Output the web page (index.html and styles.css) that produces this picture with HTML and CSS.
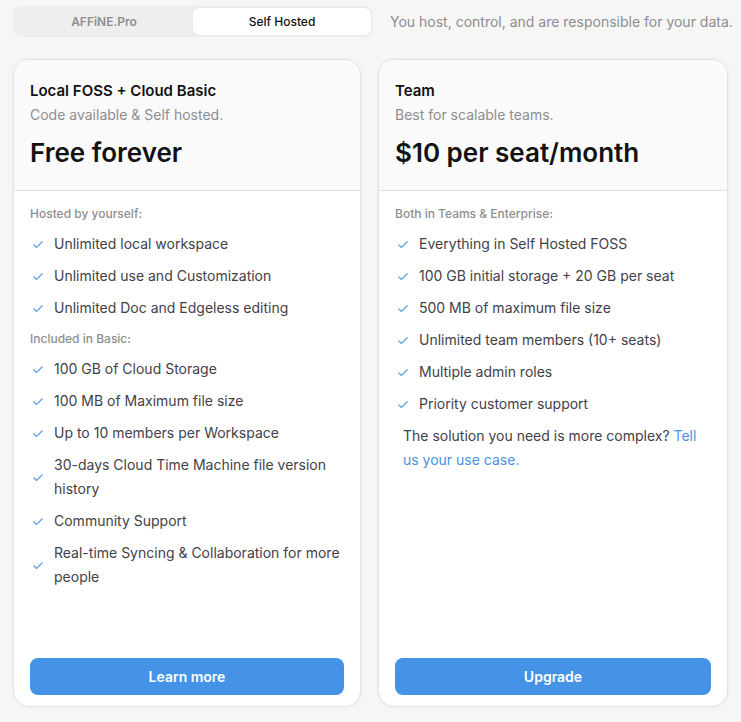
FILE: index.html
```html
<!DOCTYPE html>
<html>
<head>
<meta charset="utf-8">
<link rel="stylesheet" href="styles.css">
</head>
<body>
<div class="page">
  <div class="topbar">
    <div class="tabs">
      <div class="tab">AFFiNE.Pro</div>
      <div class="tab active">Self Hosted</div>
    </div>
    <div class="desc">You host, control, and are responsible for your data.</div>
  </div>
  <div class="cards">
    <div class="card card-left">
      <div class="card-head">
        <div class="title">Local FOSS + Cloud Basic</div>
        <div class="subtitle">Code available &amp; Self hosted.</div>
        <div class="price">Free forever</div>
      </div>
      <div class="card-body">
        <div class="group">Hosted by yourself:</div>
        <div class="item"><span class="check"><svg width="12" height="9" viewBox="0 0 12 9"><polyline points="1.5,4.5 4.5,7.5 10.5,1.5" fill="none" stroke="#5b9be6" stroke-width="1.2"/></svg></span><span>Unlimited local workspace</span></div>
        <div class="item"><span class="check"><svg width="12" height="9" viewBox="0 0 12 9"><polyline points="1.5,4.5 4.5,7.5 10.5,1.5" fill="none" stroke="#5b9be6" stroke-width="1.2"/></svg></span><span>Unlimited use and Customization</span></div>
        <div class="item"><span class="check"><svg width="12" height="9" viewBox="0 0 12 9"><polyline points="1.5,4.5 4.5,7.5 10.5,1.5" fill="none" stroke="#5b9be6" stroke-width="1.2"/></svg></span><span>Unlimited Doc and Edgeless editing</span></div>
        <div class="group">Included in Basic:</div>
        <div class="item"><span class="check"><svg width="12" height="9" viewBox="0 0 12 9"><polyline points="1.5,4.5 4.5,7.5 10.5,1.5" fill="none" stroke="#5b9be6" stroke-width="1.2"/></svg></span><span>100 GB of Cloud Storage</span></div>
        <div class="item"><span class="check"><svg width="12" height="9" viewBox="0 0 12 9"><polyline points="1.5,4.5 4.5,7.5 10.5,1.5" fill="none" stroke="#5b9be6" stroke-width="1.2"/></svg></span><span>100 MB of Maximum file size</span></div>
        <div class="item"><span class="check"><svg width="12" height="9" viewBox="0 0 12 9"><polyline points="1.5,4.5 4.5,7.5 10.5,1.5" fill="none" stroke="#5b9be6" stroke-width="1.2"/></svg></span><span>Up to 10 members per Workspace</span></div>
        <div class="item"><span class="check"><svg width="12" height="9" viewBox="0 0 12 9"><polyline points="1.5,4.5 4.5,7.5 10.5,1.5" fill="none" stroke="#5b9be6" stroke-width="1.2"/></svg></span><span>30-days Cloud Time Machine file version history</span></div>
        <div class="item"><span class="check"><svg width="12" height="9" viewBox="0 0 12 9"><polyline points="1.5,4.5 4.5,7.5 10.5,1.5" fill="none" stroke="#5b9be6" stroke-width="1.2"/></svg></span><span>Community Support</span></div>
        <div class="item"><span class="check"><svg width="12" height="9" viewBox="0 0 12 9"><polyline points="1.5,4.5 4.5,7.5 10.5,1.5" fill="none" stroke="#5b9be6" stroke-width="1.2"/></svg></span><span>Real-time Syncing &amp; Collaboration for more people</span></div>
      </div>
      <div class="card-foot"><button class="btn">Learn more</button></div>
    </div>
    <div class="card card-right">
      <div class="card-head">
        <div class="title">Team</div>
        <div class="subtitle">Best for scalable teams.</div>
        <div class="price">$10 per seat/month</div>
      </div>
      <div class="card-body">
        <div class="group">Both in Teams &amp; Enterprise:</div>
        <div class="item"><span class="check"><svg width="12" height="9" viewBox="0 0 12 9"><polyline points="1.5,4.5 4.5,7.5 10.5,1.5" fill="none" stroke="#5b9be6" stroke-width="1.2"/></svg></span><span>Everything in Self Hosted FOSS</span></div>
        <div class="item"><span class="check"><svg width="12" height="9" viewBox="0 0 12 9"><polyline points="1.5,4.5 4.5,7.5 10.5,1.5" fill="none" stroke="#5b9be6" stroke-width="1.2"/></svg></span><span>100 GB initial storage + 20 GB per seat</span></div>
        <div class="item"><span class="check"><svg width="12" height="9" viewBox="0 0 12 9"><polyline points="1.5,4.5 4.5,7.5 10.5,1.5" fill="none" stroke="#5b9be6" stroke-width="1.2"/></svg></span><span>500 MB of maximum file size</span></div>
        <div class="item"><span class="check"><svg width="12" height="9" viewBox="0 0 12 9"><polyline points="1.5,4.5 4.5,7.5 10.5,1.5" fill="none" stroke="#5b9be6" stroke-width="1.2"/></svg></span><span>Unlimited team members (10+ seats)</span></div>
        <div class="item"><span class="check"><svg width="12" height="9" viewBox="0 0 12 9"><polyline points="1.5,4.5 4.5,7.5 10.5,1.5" fill="none" stroke="#5b9be6" stroke-width="1.2"/></svg></span><span>Multiple admin roles</span></div>
        <div class="item"><span class="check"><svg width="12" height="9" viewBox="0 0 12 9"><polyline points="1.5,4.5 4.5,7.5 10.5,1.5" fill="none" stroke="#5b9be6" stroke-width="1.2"/></svg></span><span>Priority customer support</span></div>
        <div class="note">The solution you need is more complex? <a class="link">Tell us your use case.</a></div>
      </div>
      <div class="card-foot"><button class="btn">Upgrade</button></div>
    </div>
  </div>
</div>
</body>
</html>
```
FILE: styles.css
```css
* { box-sizing: border-box; }
html, body { margin: 0; padding: 0; }
body {
  background: #f6f6f5;
  font-family: Inter, "Noto Sans", sans-serif;
  color: #121212;
  width: 741px;
  height: 722px;
  overflow: hidden;
}
.page {
  padding: 6px 13px 15px 13px;
  display: flex;
  flex-direction: column;
  height: 722px;
}
.topbar {
  display: flex;
  align-items: center;
  gap: 17px;
  height: 31px;
}
.tabs {
  flex: none;
  display: flex;
  width: 360px;
  height: 31px;
  background: #eeeeee;
  border-radius: 8px;
  padding: 2px;
}
.tab {
  flex: 1;
  display: flex;
  align-items: center;
  justify-content: center;
  font-size: 12px;
  font-weight: 600;
  color: #8e8d91;
  border-radius: 6px;
}
.tab.active {
  background: #ffffff;
  color: #121212;
  font-weight: 500;
  box-shadow: 0 0 1px rgba(0,0,0,0.15);
}
.desc {
  font-size: 14px;
  color: #8e8d91;
  white-space: nowrap;
}
.cards {
  display: flex;
  gap: 17px;
  margin-top: 22px;
  flex: 1;
}
.card {
  display: flex;
  flex-direction: column;
  background: #ffffff;
  border: 1px solid #e3e3e3;
  border-radius: 16px;
  box-shadow: 0 0 4px rgba(0,0,0,0.05);
  overflow: hidden;
}
.card-left { flex: 0 0 348px; }
.card-right { flex: 1 1 auto; }
.card-head {
  background: #fafafa;
  border-bottom: 1px solid #e3e3e3;
  padding: 20px 16px 20px 16px;
}
.title {
  font-size: 15px;
  font-weight: 600;
  line-height: 22px;
  color: #121212;
}
.subtitle {
  margin-top: 2px;
  font-size: 14px;
  line-height: 22px;
  color: #8e8d91;
}
.price {
  margin-top: 10px;
  font-size: 26px;
  font-weight: 600;
  line-height: 34px;
  color: #121212;
}
.card-body {
  flex: 1;
  padding: 12px 16px;
  display: flex;
  flex-direction: column;
  gap: 8px;
}
.group {
  font-size: 12px;
  line-height: 21px;
  color: #8e8d91;
  font-weight: 500;
}
.item {
  display: flex;
  align-items: center;
  font-size: 14px;
  line-height: 24px;
  color: #424149;
}
.check {
  flex: none;
  width: 16px;
  margin-right: 8px;
  display: flex;
  justify-content: center;
  align-items: center;
}
.check svg { display: block; }
.note {
  padding-left: 8px;
  font-size: 14px;
  line-height: 24px;
  color: #424149;
}
.link {
  color: #4b91e3;
  cursor: pointer;
}
.card-foot {
  padding: 0 16px 11px 16px;
}
.btn {
  width: 100%;
  height: 37px;
  border: none;
  border-radius: 8px;
  background: #4493e6;
  color: #ffffff;
  font-family: Inter, "Noto Sans", sans-serif;
  font-size: 14px;
  font-weight: 600;
  cursor: pointer;
}
```
